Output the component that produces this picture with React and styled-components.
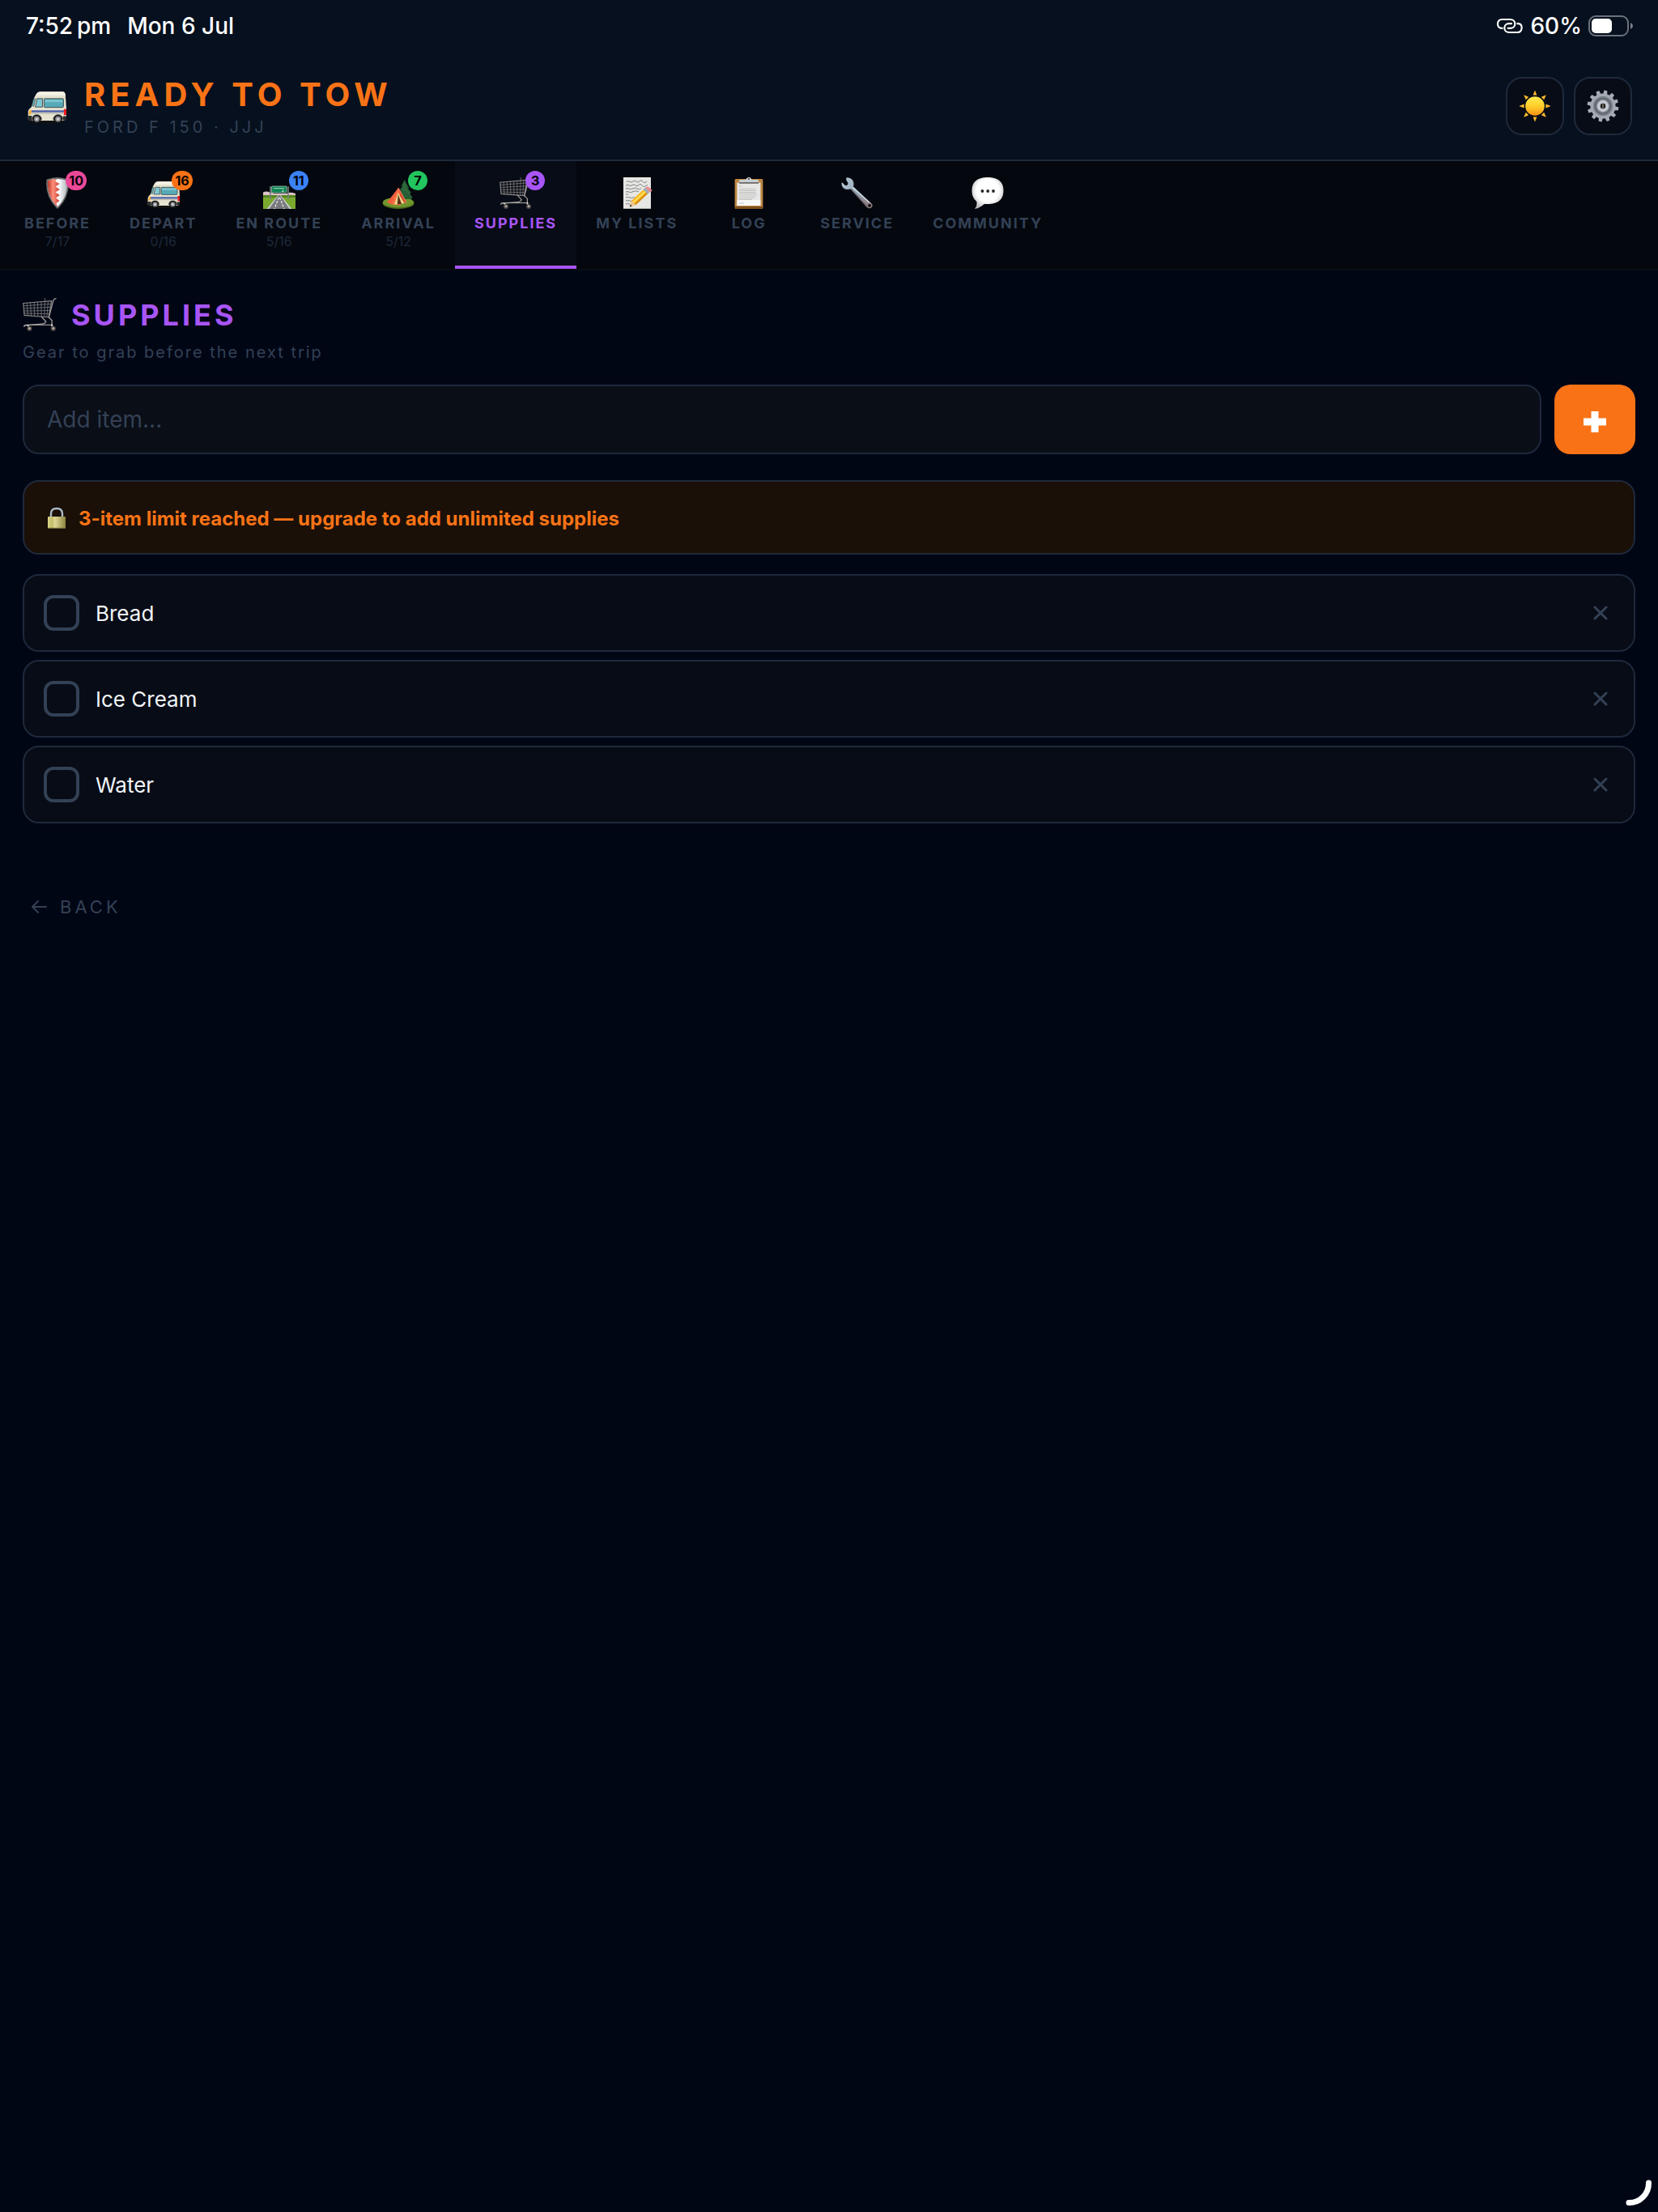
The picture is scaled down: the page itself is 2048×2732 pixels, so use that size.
import React, { useState } from "react";
import styled, { createGlobalStyle } from "styled-components";

const GlobalStyle = createGlobalStyle`
  * {
    box-sizing: border-box;
  }

  body {
    margin: 0;
    background-color: #010615;
    color: #f1f5f9;
    font-family: Inter, "Liberation Sans", sans-serif;
  }

  button,
  input {
    font-family: inherit;
  }
`;

/* icons */

const VanIcon = () => (
  <Icon viewBox="0 0 40 40" aria-hidden="true">
    <ellipse cx="20" cy="36" rx="19" ry="2" fill="#111" />
    <path
      d="M9 7.5Q10 5.4 13 5.2H36Q38.5 5.2 39 8L40 23V33.5L37 35H3L.6 33.5V25.5Q1 23 4 21L7 11Z"
      fill="#e6e3d1"
    />
    <path d="M9 9Q10 5.6 13 5.3H36Q38.6 5.3 39 9Z" fill="#f3f1e4" />
    <path d="M8 12H39.3" stroke="#bcb9a6" strokeWidth=".6" />
    <path d="M6.2 12.5 4.6 19.5 6.4 20.5 8.4 12.6Z" fill="#63b5c4" stroke="#41493f" strokeWidth=".6" />
    <path d="M10 12.4H15.4V21H8Z" fill="#7fc7d3" stroke="#3d4a4c" strokeWidth=".8" />
    <rect x="17" y="12.4" width="20" height="9" rx="1" fill="#56a9b7" stroke="#3d4a4c" strokeWidth=".8" />
    <path d="M18 13.4H36V16H18Z" fill="#8bd0da" opacity=".7" />
    <path d="M4 24.3H37.5V26.4H4Z" fill="#5062a8" />
    <path d="M4 27.6H37" stroke="#a7a593" strokeWidth=".7" />
    <path d="M1.8 24.5 4 23.7 3.6 28.5 1.4 29Z" fill="#f5a623" />
    <rect x="37.4" y="23" width="2.6" height="6.4" fill="#ec1c24" />
    <path d="M.4 30H4.5V35H.8ZM36.5 30.4H40V34.6H36.5Z" fill="#2a2b2d" />
    <path d="M4 34A5.4 5.4 0 0 1 15 34ZM26 34A5.4 5.4 0 0 1 37 34Z" fill="#555549" />
    <circle cx="9.5" cy="33.4" r="4.4" fill="#17181b" />
    <circle cx="9.5" cy="33.4" r="2.9" fill="#8b8d93" />
    <circle cx="9.5" cy="33.4" r="1.4" fill="#d3d5da" />
    <circle cx="31.4" cy="33.4" r="4.4" fill="#17181b" />
    <circle cx="31.4" cy="33.4" r="2.9" fill="#8b8d93" />
    <circle cx="31.4" cy="33.4" r="1.4" fill="#d3d5da" />
  </Icon>
);

const ShieldIcon = () => (
  <Icon viewBox="0 0 40 40" aria-hidden="true">
    <defs>
      <linearGradient id="shieldRed" x1="0" x2="1">
        <stop offset="0" stopColor="#b8392c" />
        <stop offset=".45" stopColor="#ff8f7c" />
        <stop offset="1" stopColor="#c93b2b" />
      </linearGradient>
      <linearGradient id="shieldWhite" x1="0" x2="1">
        <stop offset="0" stopColor="#dfe3e7" />
        <stop offset=".6" stopColor="#f7f9fa" />
        <stop offset="1" stopColor="#aeb5bb" />
      </linearGradient>
    </defs>
    <path d="M6.5 2.5Q14 0 20 0T33.5 2.5Q36 24 20 39Q4 24 6.5 2.5Z" fill="#6a6c6b" />
    <path d="M8.2 4Q14 2 20 2T31.8 4Q33.6 23 20 36.5Q6.4 23 8.2 4Z" fill="url(#shieldWhite)" />
    <path
      d="M8.2 4Q14 2 19 2L17 5L22.5 8L17.5 11.5L22.8 15L17.5 18.5L22.8 22L18 25.5L22.5 29L18.5 32L20 36.5Q6.4 23 8.2 4Z"
      fill="url(#shieldRed)"
    />
  </Icon>
);

const RoadIcon = () => (
  <Icon viewBox="0 0 40 40" aria-hidden="true">
    <path d="M0 23V18.5Q4 16.5 8 18.5Q11 18 13 20H29Q33 17.5 40 20V23Z" fill="#dcc3c7" />
    <path d="M0 22H40V39H0Z" fill="#79a92e" />
    <path d="M0 22H40V25H0Z" fill="#55861f" />
    <path d="M19 22H21L35 39H5Z" fill="#77797d" />
    <path d="M18.4 22H19.3L7.5 39H4.5ZM20.7 22H21.6L35.5 39H32.5Z" fill="#c6c8c9" />
    <path d="M19.4 25 14 39M20.6 25 26 39" stroke="#f4f4f4" strokeWidth="1.2" strokeDasharray="3 1.6" />
    <path d="M9 11.5V27M31 11.5V27" stroke="#77807f" strokeWidth="1.6" />
    <path d="M7.5 12H32.5M8 15H32" stroke="#5c6463" strokeWidth=".8" />
    <rect x="10.6" y="11" width="18.4" height="8" rx=".8" fill="#0e8352" stroke="#d8efe3" strokeWidth=".6" />
    <path d="M13 13.6H26" stroke="#a9dcc4" strokeWidth="1.2" strokeDasharray="1.6 .4" />
    <path d="M24.4 15.4V17.8M23.3 16.8 24.4 18 25.5 16.8" stroke="#e7fff3" strokeWidth=".7" fill="none" />
  </Icon>
);

const TentIcon = () => (
  <Icon viewBox="0 0 40 40" aria-hidden="true">
    <ellipse cx="20" cy="32" rx="19.5" ry="7.2" fill="#46621a" />
    <ellipse cx="20" cy="31" rx="19.2" ry="6.5" fill="#6f962d" />
    <path
      d="M27.5 3 23.6 11H25L21.5 16H23.5L21 22L25 27H36L37.5 24.5L33.5 19.5H36.5L31.5 13.5H33.4Z"
      fill="#265e35"
    />
    <path d="M27 8 29 11M25 14 28 17M31 17 34 21M27 12 31 16" stroke="#4e8c55" strokeWidth=".8" />
    <path d="M20 13 29.8 31.5 21 32.8 18 20Z" fill="#d4472c" />
    <path d="M20 13 6 31 12 33.5 18.6 19Z" fill="#f2603d" />
    <path d="M20 13 12 33.5 22.5 34.6 22 20Z" fill="#ff7048" />
    <path d="M19.6 19 15 33.8 27.6 32Z" fill="#f0d68b" />
    <path d="M19.8 21 18.8 33.4 24 32.8Z" fill="#58301c" />
    <path d="M20 13 30.2 31.4" stroke="#ff8a63" strokeWidth="1" />
  </Icon>
);

const CartIcon = () => (
  <Icon viewBox="0 0 40 40" aria-hidden="true">
    <g fill="none" stroke="#7b7977" strokeWidth=".8" strokeLinecap="round">
      <path d="M.8 6.2 34 3.4 30.6 22.6 2 20.4Z" stroke="#8d8b89" strokeWidth="1.1" />
      <path d="M1 9.3 33.4 7M1.3 12.4 32.8 10.8M1.6 15.3 32.2 14.8M1.8 18 31.5 18.8" />
      <path d="M5 6 6 20.7M9.2 5.6 10 21M13.4 5.2 14 21.4M17.6 4.9 18 21.7M21.8 4.5 22 22M26 4.2 25.6 22.2M30 3.9 28.5 22.4" />
      <path d="M26 0Q26.6 2 26.4 4" />
      <path d="M39 .6Q36.6 1 36 3.2L30.8 22.6" stroke="#9a9794" strokeWidth="1.3" />
      <path d="M22.4 22.4 27.4 27.8Q26 30.4 23 30.6L2 32.2M30.6 22.6 34.4 26.4V31.6" stroke="#a5a29e" strokeWidth="1.2" />
      <path d="M1.4 33.6 4 31.6H35" stroke="#b4b1ad" strokeWidth="1" />
      <path d="M6 32.4 7.8 35M34.2 31.6 35.4 35" stroke="#d7d4d0" strokeWidth="1.8" />
    </g>
    <circle cx="8" cy="36" r="3" fill="#4b4642" />
    <circle cx="8" cy="35.8" r="1.5" fill="#b0aaa4" />
    <circle cx="36" cy="36" r="3" fill="#4b4642" />
    <circle cx="36" cy="35.8" r="1.5" fill="#b0aaa4" />
  </Icon>
);

const MemoIcon = () => (
  <Icon viewBox="0 0 40 40" aria-hidden="true">
    <rect x="3" y="0" width="34" height="39" fill="#e6e6e3" />
    <rect x="3" y="38" width="34" height="1" fill="#b3b3b0" />
    <g stroke="#77777a" strokeWidth=".9" fill="none">
      <path d="M7 5.6Q9 3.8 11 5.4T15 5T19 5.2T23 4.8T27 5.2T32 4.8" />
      <path d="M6 10Q8 8.8 10 10T14 9.6T18 10T22 9.4T26 10T33 9.4" />
      <path d="M6 14Q8 13 10 14.2T15 13.8T20 14T25 13.6" />
      <path d="M6 18Q8 17 10 18.2T15 17.6T22 17.8M6 21H9M6 25Q9 23.8 11 25T17 24.6M6 29Q9 27.8 11 29T14 28.6M6 33Q8 32 11 33.2" />
    </g>
    <path d="M10.8 36.6 13 29 29.6 13.4 34.6 18.8 18.4 34Z" fill="#f6b91a" />
    <path d="M14.4 30.4 31 15 32.4 16.4 16 31.8Z" fill="#ffdf63" />
    <path d="M18.4 34 34.6 18.8 33.2 17.4 17 32.4Z" fill="#d68710" />
    <path d="M10.8 36.6 13 29 18.4 34Z" fill="#ebc591" />
    <path d="M10.8 36.6 11.7 33.5 13.8 35.5Z" fill="#333" />
    <path d="M27.6 15.2 30.2 12.8 35.4 18.2 32.8 20.6Z" fill="#9daeb9" />
    <path d="M30.2 12.8Q32.5 10.6 35 12.6T38.4 16.2Q38.6 17 35.4 18.2Z" fill="#e88a90" />
  </Icon>
);

const ClipboardIcon = () => (
  <Icon viewBox="0 0 40 40" aria-hidden="true">
    <rect x="2.6" y="2" width="34.8" height="37" rx="1.6" fill="#bd8640" />
    <path d="M3 36H37V37.6Q37 39 35.6 39H4.4Q3 39 3 37.6Z" fill="#80501f" />
    <path d="M5.4 6.6H34.4V35H5.4Z" fill="#e6e6e5" />
    <path d="M5.4 28H34.4V35H5.4Z" fill="#f8f8f8" />
    <path
      d="M8 11H12M8 14.2H28M8 16.4H29M8 18.6H28.4M8 20.8H30M8 23H29M8 25.2H28M8 27.4H24M8 32H14"
      stroke="#c3c3c3"
      strokeWidth="1.1"
    />
    <path d="M8 4.2Q8 3 10 3H15.6Q17 3 17 1.8Q17.4 0 20 0T23 1.8Q23 3 24.4 3H30Q32 3 32 4.2V6.6H8Z" fill="#c9cfd6" />
    <path d="M8 6H32V7.8H8Z" fill="#6e6b68" />
    <circle cx="20" cy="2" r="1" fill="#3e4044" />
  </Icon>
);

const WrenchIcon = () => (
  <Icon viewBox="0 0 40 40" aria-hidden="true">
    <defs>
      <linearGradient id="wrench" x1="0" y1="0" x2="1" y2="1">
        <stop offset="0" stopColor="#b9cbd9" />
        <stop offset=".5" stopColor="#93a5b4" />
        <stop offset="1" stopColor="#8a6f6f" />
      </linearGradient>
    </defs>
    <path
      d="M6.6.4Q5.6 3 7.4 5.2Q9.6 7.6 7.6 9.4Q5.4 11 3.4 8.4Q1.8 6.4.6 6.6Q0 11 3 13.4Q6.4 16 11.6 14.6L31 36.2Q34 39.6 37.4 37.4Q40 34.6 37.4 32L15 11.6Q16.6 6.4 13.8 3Q11 0 6.6.4Z"
      fill="url(#wrench)"
    />
    <path d="M14.4 12.4 35 31.4" stroke="#d9e6ef" strokeWidth="1.2" />
    <path d="M12.4 14.4 31.6 35.4" stroke="#5f4d50" strokeWidth="1" />
    <circle cx="35" cy="34.8" r="1.9" fill="#05080f" />
  </Icon>
);

const SpeechIcon = () => (
  <Icon viewBox="0 0 40 40" aria-hidden="true">
    <defs>
      <radialGradient id="bubble" cx=".5" cy=".42" r=".6">
        <stop offset=".6" stopColor="#fff" />
        <stop offset="1" stopColor="#b6b6b6" />
      </radialGradient>
    </defs>
    <path
      d="M18 0H22Q39.5 1 39.5 16.5T22 33H15.6Q10.6 38 4 39Q7.2 35.4 6.4 30Q.5 25.4.5 16.5Q.5 1 18 0Z"
      fill="url(#bubble)"
    />
    <circle cx="13.4" cy="17" r="1.9" fill="#262626" />
    <circle cx="20.2" cy="17" r="1.9" fill="#262626" />
    <circle cx="27" cy="17" r="1.9" fill="#262626" />
  </Icon>
);

const SunIcon = () => (
  <Icon viewBox="0 0 40 40" aria-hidden="true">
    <defs>
      <linearGradient id="sun" x1="0" y1="0" x2="0" y2="1">
        <stop offset="0" stopColor="#ffe94f" />
        <stop offset=".5" stopColor="#ffcf2b" />
        <stop offset="1" stopColor="#f39314" />
      </linearGradient>
    </defs>
    {[0, 45, 90, 135, 180, 225, 270, 315].map(angle => (
      <path key={angle} d="M20 .4 22.4 6.6H17.6Z" fill="#fdbb2b" transform={`rotate(${angle} 20 20)`} />
    ))}
    <circle cx="20" cy="20" r="11.8" fill="url(#sun)" />
  </Icon>
);

const GearIcon = () => (
  <Icon viewBox="0 0 40 40" aria-hidden="true">
    {Array.from({ length: 12 }, (_, i) => (
      <path key={i} d="M17.6 6 18 .6H22L22.8 6Z" fill="#a9adb5" transform={`rotate(${i * 30 + 10} 20 20)`} />
    ))}
    <circle cx="20" cy="20" r="15.6" fill="#a4a8b0" />
    <circle cx="20" cy="20" r="12" fill="#5d636b" />
    <circle cx="20" cy="20" r="11.2" fill="none" stroke="#858b94" strokeWidth="1.2" />
    <circle cx="20" cy="20" r="9" fill="#777e87" />
    <circle cx="20" cy="20" r="5.2" fill="#4a4d52" stroke="#c5c8d0" strokeWidth="4" />
    <circle cx="20" cy="20" r="3.2" fill="#26211e" />
    <path d="M20 16.8V23.2" stroke="#8f8b88" strokeWidth="1.2" />
  </Icon>
);

const LockIcon = () => (
  <svg width="22" height="28" viewBox="0 0 22 28" aria-hidden="true">
    <defs>
      <linearGradient id="lock" x1="0" x2="1">
        <stop offset="0" stopColor="#d9d488" />
        <stop offset=".25" stopColor="#c2bb68" />
        <stop offset=".4" stopColor="#ded797" />
        <stop offset="1" stopColor="#8d853e" />
      </linearGradient>
    </defs>
    <path d="M4 13V8.5Q4 2 11 2T18 8.5V13" fill="none" stroke="#a9bac6" strokeWidth="2.4" />
    <rect y="12" width="22" height="15" rx="1" fill="url(#lock)" />
    <path d="M0 26.4H22" stroke="#6b6534" strokeWidth="1.2" />
  </svg>
);

const LinkIcon = () => (
  <svg width="34" height="20" viewBox="0 0 102 60" aria-hidden="true">
    <g fill="none" stroke="#fff" strokeWidth="6.4" strokeLinecap="round">
      <path d="M23 38.5H21C11 38.5 6 31 6 23C6 13 12 6 22 6H52C63 6 70 13 70 22.5C70 32 63 38.5 54 38.5H44" />
      <path d="M79 21.5H81C91 21.5 95 29 95 37C95 47 89 54 79 54H49C38 54 31 47 31 38C31 28 38 21.5 47 21.5H57" />
    </g>
  </svg>
);

const BatteryIcon = () => (
  <svg width="56" height="26" viewBox="0 0 56 26" aria-hidden="true">
    <rect x="1" y="1" width="48" height="24" rx="8" fill="none" stroke="#6c717b" strokeWidth="2" />
    <rect x="4" y="4" width="25" height="18" rx="5" fill="#fff" />
    <path d="M52 9Q55 10.5 55 13T52 17Z" fill="#7b808a" />
  </svg>
);

const PlusIcon = () => (
  <svg width="28" height="28" viewBox="0 0 28 28" aria-hidden="true">
    <path d="M0 14H28M14 1V27" stroke="#fff" strokeWidth="9" />
  </svg>
);

const CrossIcon = () => (
  <svg width="18" height="18" viewBox="0 0 18 18" aria-hidden="true">
    <path d="M2 2 16 16M16 2 2 16" stroke="currentColor" strokeWidth="3" strokeLinecap="round" />
  </svg>
);

const BackArrow = () => (
  <svg width="20" height="18" viewBox="0 0 20 18" aria-hidden="true">
    <path d="M19 9H2M9 2 2 9 9 16" fill="none" stroke="currentColor" strokeWidth="2" strokeLinecap="round" strokeLinejoin="round" />
  </svg>
);

/* data */

const tabs = [
  { name: "BEFORE", icon: <ShieldIcon />, badge: 10, color: "#ec4899", count: "7/17" },
  { name: "DEPART", icon: <VanIcon />, badge: 16, color: "#f97316", count: "0/16" },
  { name: "EN ROUTE", icon: <RoadIcon />, badge: 11, color: "#3b82f6", count: "5/16" },
  { name: "ARRIVAL", icon: <TentIcon />, badge: 7, color: "#22c55e", count: "5/12" },
  { name: "SUPPLIES", icon: <CartIcon />, badge: 3, color: "#a855f7" },
  { name: "MY LISTS", icon: <MemoIcon /> },
  { name: "LOG", icon: <ClipboardIcon /> },
  { name: "SERVICE", icon: <WrenchIcon /> },
  { name: "COMMUNITY", icon: <SpeechIcon /> }
];

const StatusBar = () => (
  <Status>
    <StatusGroup $gap={20}>
      <span>7:52{"\u2009"}pm</span>
      <span>Mon 6 Jul</span>
    </StatusGroup>
    <StatusGroup $gap={8}>
      <LinkIcon />
      <span>60%</span>
      <BatteryIcon />
    </StatusGroup>
  </Status>
);

const Header = () => (
  <HeaderContainer>
    <StatusBar />
    <Brand>
      <IconBox $size={48}>
        <VanIcon />
      </IconBox>
      <BrandText>
        <Title>READY TO TOW</Title>
        <Vehicle>FORD F 150 · JJJ</Vehicle>
      </BrandText>
      <HeaderButton type="button" aria-label="Light theme">
        <IconBox $size={40}>
          <SunIcon />
        </IconBox>
      </HeaderButton>
      <HeaderButton type="button" aria-label="Settings">
        <IconBox $size={40}>
          <GearIcon />
        </IconBox>
      </HeaderButton>
    </Brand>
  </HeaderContainer>
);

const TabBar = ({ active, onSelect }) => (
  <Nav>
    {tabs.map(({ name, icon, badge, color, count }) => (
      <Tab
        key={name}
        type="button"
        $active={name === active}
        aria-current={name === active ? "page" : undefined}
        onClick={() => onSelect(name)}
      >
        <IconBox $size={40}>
          {icon}
          {badge && <Badge $color={color}>{badge}</Badge>}
        </IconBox>
        <TabLabel>{name}</TabLabel>
        {count && <TabCount>{count}</TabCount>}
      </Tab>
    ))}
  </Nav>
);

const SupplyItem = ({ name, done, onToggle, onRemove }) => (
  <Item>
    <ItemLabel>
      <Checkbox type="checkbox" checked={done} onChange={onToggle} />
      <span>{name}</span>
    </ItemLabel>
    <RemoveButton type="button" aria-label={`Remove ${name}`} onClick={onRemove}>
      <CrossIcon />
    </RemoveButton>
  </Item>
);

const App = () => {
  const [active, setActive] = useState("SUPPLIES");
  const [text, setText] = useState("");
  const [items, setItems] = useState([
    { name: "Bread", done: false },
    { name: "Ice Cream", done: false },
    { name: "Water", done: false }
  ]);
  const isFull = items.length >= 3;

  const addItem = e => {
    e.preventDefault();
    if (!text.trim() || isFull) return;
    setItems([...items, { name: text.trim(), done: false }]);
    setText("");
  };

  const toggleItem = index =>
    setItems(items.map((item, i) => (i === index ? { ...item, done: !item.done } : item)));

  return (
    <Page>
      <GlobalStyle />
      <Header />
      <TabBar active={active} onSelect={setActive} />
      <Main>
        <Heading>
          <IconBox $size={42}>
            <CartIcon />
          </IconBox>
          <HeadingText>SUPPLIES</HeadingText>
        </Heading>
        <Hint>Gear to grab before the next trip</Hint>
        <AddForm onSubmit={addItem}>
          <AddInput
            type="text"
            aria-label="Add item"
            placeholder="Add item..."
            value={text}
            onChange={e => setText(e.target.value)}
          />
          <AddButton type="submit" aria-label="Add">
            <PlusIcon />
          </AddButton>
        </AddForm>
        {isFull && (
          <LimitButton type="button">
            <LockIcon />
            <span>3-item limit reached — upgrade to add unlimited supplies</span>
          </LimitButton>
        )}
        <List>
          {items.map((item, index) => (
            <SupplyItem
              key={item.name}
              name={item.name}
              done={item.done}
              onToggle={() => toggleItem(index)}
              onRemove={() => setItems(items.filter((_, i) => i !== index))}
            />
          ))}
        </List>
        <BackButton type="button">
          <BackArrow />
          <span>BACK</span>
        </BackButton>
      </Main>
      <Corner width="36" height="36" viewBox="0 0 36 36" aria-hidden="true">
        <path d="M4 28.5A24 24 0 0 0 28.5 4" fill="none" stroke="#fff" strokeWidth="7" strokeLinecap="round" />
      </Corner>
    </Page>
  );
};

const Page = styled.div`
  min-height: 100vh;
`;

const Icon = styled.svg`
  display: block;
  width: 100%;
  height: 100%;
`;

const IconBox = styled.span`
  position: relative;
  flex-shrink: 0;
  width: ${props => props.$size}px;
  height: ${props => props.$size}px;
`;

const HeaderContainer = styled.header`
  background-color: #06101e;
  border-bottom: 2px solid #1e293b;
`;

const Status = styled.div`
  display: flex;
  justify-content: space-between;
  height: 64px;
  padding: 0 30px 0 32px;
  color: white;
  font-size: 28px;
  font-weight: 500;
`;

const StatusGroup = styled.div`
  display: flex;
  align-items: center;
  gap: ${props => props.$gap}px;
`;

const Brand = styled.div`
  display: flex;
  align-items: center;
  gap: 12px;
  padding: 29px 32px 28px 34px;
`;

const BrandText = styled.div`
  flex: 1;
  padding: 2px 0 0 10px;
`;

const Title = styled.h1`
  margin: 0 0 6px;
  color: #f97316;
  font-size: 40px;
  font-weight: 700;
  line-height: 44px;
  letter-spacing: 6px;
`;

const Vehicle = styled.div`
  color: #334155;
  font-size: 20px;
  line-height: 24px;
  letter-spacing: 4px;
`;

const HeaderButton = styled.button`
  display: flex;
  align-items: center;
  justify-content: center;
  width: 72px;
  height: 72px;
  padding: 0;
  background-color: #080c16;
  border: 2px solid #1e293b;
  border-radius: 20px;
`;

const Nav = styled.nav`
  display: flex;
  padding: 0 6px;
  background-color: #04070e;
  border-bottom: 2px solid #080c15;
`;

const Tab = styled.button`
  display: flex;
  flex-direction: column;
  align-items: center;
  min-width: 128px;
  height: 133px;
  padding: 20px 24px 0;
  background-color: ${props => (props.$active ? "#080c16" : "transparent")};
  border: 0;
  border-bottom: 4px solid ${props => (props.$active ? "#a855f7" : "transparent")};
  color: ${props => (props.$active ? "#a855f7" : "#334155")};
`;

const TabLabel = styled.span`
  margin-top: 6px;
  font-size: 18px;
  font-weight: 700;
  line-height: 22px;
  letter-spacing: 2px;
  white-space: nowrap;
`;

const TabCount = styled.span`
  color: #1e293b;
  font-size: 16px;
  line-height: 22px;
`;

const Badge = styled.span`
  position: absolute;
  top: -8px;
  right: -16px;
  min-width: 24px;
  height: 24px;
  padding: 0 4px;
  background-color: ${props => props.$color};
  border-radius: 12px;
  color: black;
  font-size: 16px;
  font-weight: 700;
  line-height: 24px;
  text-align: center;
`;

const Main = styled.main`
  padding: 31px 28px;
`;

const Heading = styled.div`
  display: flex;
  align-items: center;
  gap: 18px;
`;

const HeadingText = styled.h2`
  margin: 0;
  color: #a855f7;
  font-size: 36px;
  font-weight: 700;
  line-height: 48px;
  letter-spacing: 4px;
`;

const Hint = styled.p`
  margin: 10px 0 28px;
  color: #334155;
  font-size: 20px;
  line-height: 24px;
  letter-spacing: 2px;
`;

const AddForm = styled.form`
  display: flex;
  gap: 16px;
  margin-bottom: 32px;
`;

const AddInput = styled.input`
  flex: 1;
  height: 86px;
  padding: 0 28px;
  background-color: #0a0e17;
  border: 2px solid #1e293b;
  border-radius: 20px;
  color: #f1f5f9;
  font-size: 28px;

  &::placeholder {
    color: #334155;
  }
`;

const AddButton = styled.button`
  display: flex;
  align-items: center;
  justify-content: center;
  width: 100px;
  padding: 6px 0 0;
  background-color: #f97316;
  border: 0;
  border-radius: 20px;
`;

const LimitButton = styled.button`
  display: flex;
  align-items: center;
  gap: 16px;
  width: 100%;
  height: 92px;
  padding: 2px 28px 0 29px;
  background-color: #1a1008;
  border: 2px solid #1e293b;
  border-radius: 20px;
  color: #f97316;
  font-size: 24px;
  font-weight: 700;
`;

const List = styled.ul`
  display: flex;
  flex-direction: column;
  gap: 10px;
  margin: 24px 0 0;
  padding: 0;
  list-style: none;
`;

const Item = styled.li`
  display: flex;
  align-items: center;
  height: 96px;
  padding: 0 24px;
  background-color: #080c16;
  border: 2px solid #1e293b;
  border-radius: 20px;
`;

const ItemLabel = styled.label`
  flex: 1;
  display: flex;
  align-items: center;
  gap: 20px;
  font-size: 26px;
`;

const Checkbox = styled.input`
  appearance: none;
  width: 44px;
  height: 44px;
  margin: 0;
  border: 4px solid #334155;
  border-radius: 12px;

  &:checked {
    background-color: #a855f7;
    border-color: #a855f7;
  }
`;

const RemoveButton = styled.button`
  display: flex;
  padding: 8px;
  background: none;
  border: 0;
  color: #334155;
`;

const BackButton = styled.button`
  display: flex;
  align-items: center;
  gap: 16px;
  margin-top: 80px;
  padding: 10px;
  background: none;
  border: 0;
  color: #334155;
  font-size: 22px;
  line-height: 26px;
  letter-spacing: 4px;
`;

const Corner = styled.svg`
  position: fixed;
  right: 4px;
  bottom: 4px;
`;

export default App;
